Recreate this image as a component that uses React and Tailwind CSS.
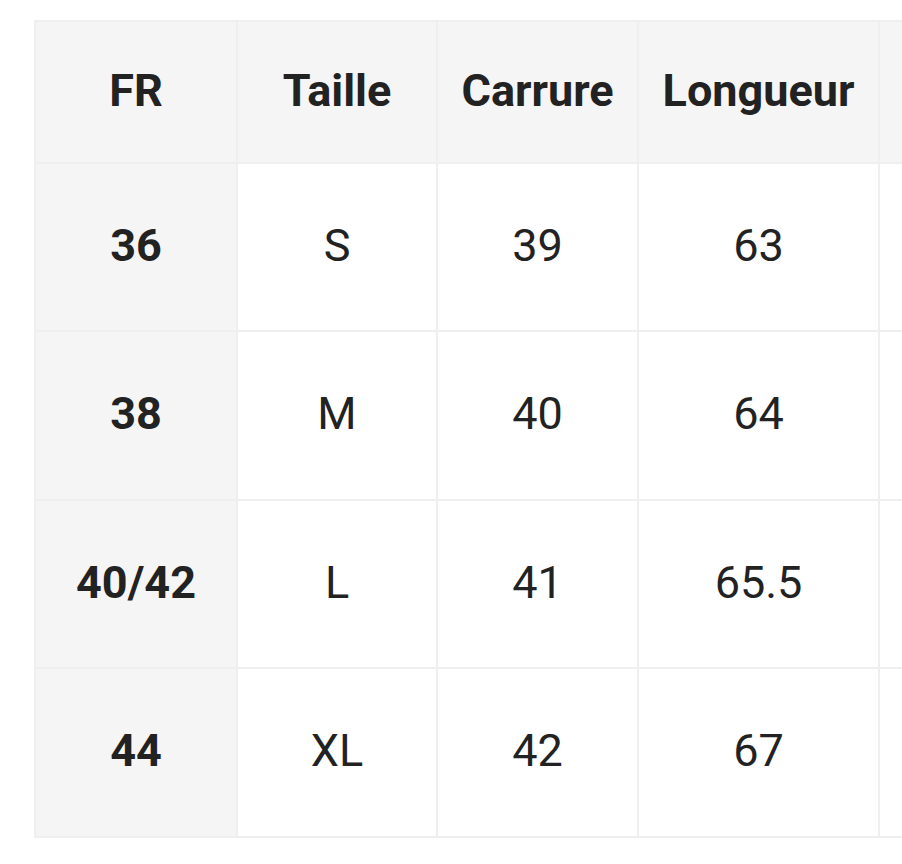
import React from 'react';

const rows = [
  { fr: '36', taille: 'S', carrure: '39', longueur: '63', h: 'h-[168px]' },
  { fr: '38', taille: 'M', carrure: '40', longueur: '64', h: 'h-[169px]' },
  { fr: '40/42', taille: 'L', carrure: '41', longueur: '65.5', h: 'h-[168px]' },
  { fr: '44', taille: 'XL', carrure: '42', longueur: '67', h: 'h-[169px]' },
];

const cell = 'border-2 border-[#efefef] text-center align-middle p-0 pb-[4px]';

export default function App() {
  return (
    <div
      className="w-[902px] h-[864px] overflow-hidden bg-white pt-[20px] pl-[34px] text-[#222222]"
      style={{ fontFamily: 'Roboto, "Liberation Sans", sans-serif' }}
    >
      <table className="table-fixed border-collapse w-[1090px] text-[45px] leading-none">
        <colgroup>
          <col className="w-[202px]" />
          <col className="w-[200px]" />
          <col className="w-[201px]" />
          <col className="w-[241px]" />
          <col className="w-[246px]" />
        </colgroup>
        <thead>
          <tr className="h-[142px] bg-[#f5f5f5]">
            <th className={`${cell} font-bold`}>FR</th>
            <th className={`${cell} font-bold`}>Taille</th>
            <th className={`${cell} font-bold`}>Carrure</th>
            <th className={`${cell} font-bold`}>Longueur</th>
            <th className={`${cell} font-bold`}></th>
          </tr>
        </thead>
        <tbody>
          {rows.map((r) => (
            <tr key={r.fr} className={r.h}>
              <td className={`${cell} bg-[#f5f5f5] font-bold`}>{r.fr}</td>
              <td className={`${cell} font-normal`}>{r.taille}</td>
              <td className={`${cell} font-normal`}>{r.carrure}</td>
              <td className={`${cell} font-normal`}>{r.longueur}</td>
              <td className={`${cell} font-normal`}></td>
            </tr>
          ))}
        </tbody>
      </table>
    </div>
  );
}
